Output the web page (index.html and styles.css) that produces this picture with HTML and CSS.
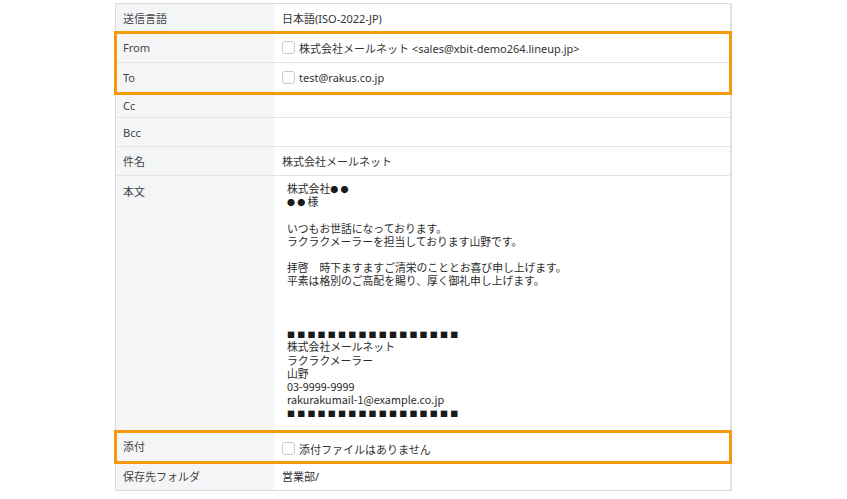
FILE: index.html
```html
<!DOCTYPE html>
<html lang="ja">
<head>
    <meta charset="UTF-8">
    <meta name="viewport" content="width=device-width, initial-scale=1.0">
    <title>メール詳細</title>
    <link rel="stylesheet" href="styles.css">
</head>
<body>
    <div class="mail-detail">
        <div class="row">
            <div class="label">送信言語</div>
            <div class="value">日本語(ISO-2022-JP)</div>
        </div>

        <div class="highlight">
            <div class="row row-tall">
                <div class="label">From</div>
                <div class="value"><span class="check"></span>株式会社メールネット &lt;sales@xbit-demo264.lineup.jp&gt;</div>
            </div>
            <div class="row row-tall">
                <div class="label">To</div>
                <div class="value"><span class="check"></span>test@rakus.co.jp</div>
            </div>
        </div>

        <div class="row row-short">
            <div class="label">Cc</div>
            <div class="value"></div>
        </div>
        <div class="row">
            <div class="label">Bcc</div>
            <div class="value"></div>
        </div>
        <div class="row">
            <div class="label">件名</div>
            <div class="value">株式会社メールネット</div>
        </div>
        <div class="row row-body">
            <div class="label">本文</div>
            <div class="value"><pre class="body-text">株式会社<span class="mark">●●</span>
<span class="mark">●●</span>様

いつもお世話になっております。
ラクラクメーラーを担当しております山野です。

拝啓　時下ますますご清栄のこととお喜び申し上げます。
平素は格別のご高配を賜り、厚く御礼申し上げます。



<span class="mark">■■■■■■■■■■■■■■■■■</span>
株式会社メールネット
ラクラクメーラー
山野
03-9999-9999
rakurakumail-1@example.co.jp
<span class="mark">■■■■■■■■■■■■■■■■■</span></pre></div>
        </div>

        <div class="highlight">
            <div class="row row-tall row-attach">
                <div class="label">添付</div>
                <div class="value"><span class="check"></span>添付ファイルはありません</div>
            </div>
        </div>

        <div class="row row-last">
            <div class="label">保存先フォルダ</div>
            <div class="value">営業部/</div>
        </div>
    </div>
</body>
</html>
```

FILE: styles.css
```css
* {
    margin: 0;
    padding: 0;
    box-sizing: border-box;
}

body {
    background: #fff;
    font-family: "Noto Sans", "Noto Sans CJK JP", sans-serif;
    font-size: 11px;
    color: #333;
}

.mail-detail {
    width: 616px;
    margin: 3px 0 0 115px;
    border: 1px solid #dadbdf;
    box-shadow: 1px 1px 1px #e6e6e6;
}

.row {
    display: grid;
    grid-template-columns: 158px 1fr;
    height: 29px;
    border-bottom: 1px solid #e2e4e9;
}

.row-tall {
    height: 30px;
}

.row-short {
    height: 25px;
}

.row-last {
    height: 28px;
    border-bottom: none;
}

.label {
    display: flex;
    align-items: center;
    padding: 0 7px;
    background: #f4f5f7;
    color: #444;
}

.value {
    display: flex;
    align-items: center;
    padding: 0 8px;
    background: #fff;
}

.row-body {
    height: 256px;
}

.row-body .label {
    align-items: flex-start;
    padding-top: 7px;
}

.row-body .value {
    align-items: flex-start;
    padding: 6px 13px;
}

.row-attach .label {
    align-items: flex-start;
    padding-top: 6px;
}

.row-attach .value {
    padding-top: 4px;
}

.body-text {
    font-family: "Noto Sans CJK JP", sans-serif;
    font-size: 10.8px;
    line-height: 13.2px;
    color: #2b2b2b;
}

/* ●/■ in the original font are small and spaced apart */
.mark {
    display: inline-block;
    font-size: 8px;
    line-height: 9px;
    letter-spacing: 2.2px;
    color: #1a1a1a;
}

.check {
    display: inline-block;
    width: 13px;
    height: 13px;
    margin-right: 4px;
    border: 1px solid #c6cad1;
    border-radius: 3px;
    background: #fff;
}

.highlight {
    outline: 3px solid #f59a0c;
    outline-offset: -1px;
    position: relative;
}
```
